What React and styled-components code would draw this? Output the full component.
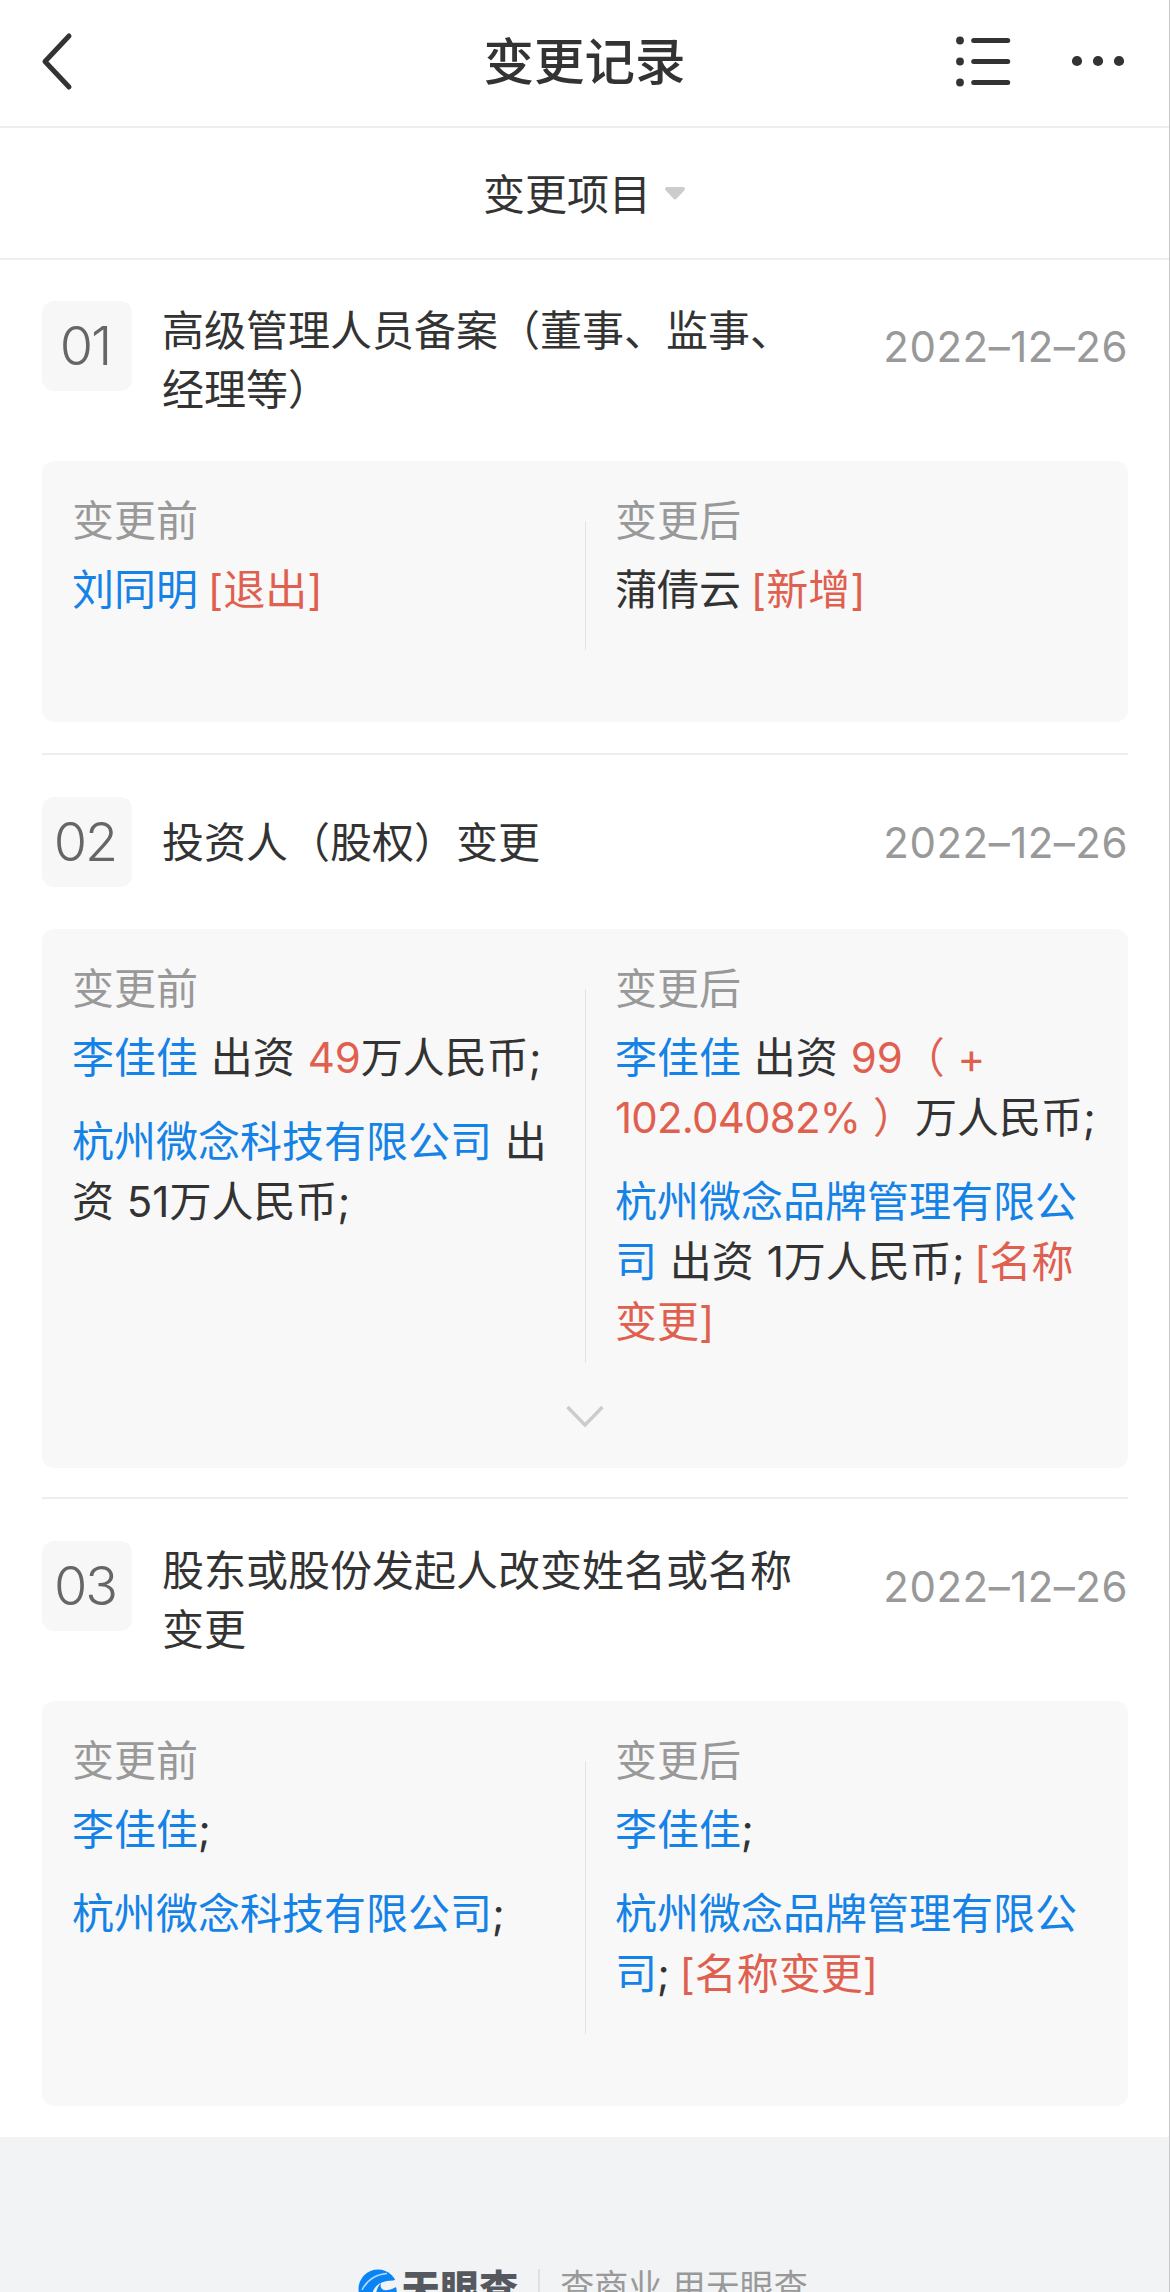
import React from "react";
import styled, { createGlobalStyle } from "styled-components";

const GlobalStyle = createGlobalStyle`
  * {
    box-sizing: border-box;
  }

  body {
    margin: 0;
    background: #fff;
    color: #333;
    font-family: Inter, "Noto Sans CJK SC", sans-serif;
    font-size: 42px;
  }
`;

// every entry is a list of lines, every line a list of [kind, text]
const records = [
  {
    no: "01",
    title: ["高级管理人员备案（董事、监事、", "经理等）"],
    date: "2022–12–26",
    before: [[[["link", "刘同明"], ["", " "], ["tag", "[退出]"]]]],
    after: [[[["", "蒲倩云 "], ["tag", "[新增]"]]]],
  },
  {
    no: "02",
    title: ["投资人（股权）变更"],
    date: "2022–12–26",
    more: true,
    before: [
      [[["link", "李佳佳"], ["", " 出资 "], ["mark", "49"], ["", "万人民币;"]]],
      [
        [["link", "杭州微念科技有限公司"], ["", " 出"]],
        [["", "资 51万人民币;"]],
      ],
    ],
    after: [
      [
        [["link", "李佳佳"], ["", " 出资 "], ["mark", "99（ +"]],
        [["rate", "102.04082%"], ["mark", " ）"], ["", "万人民币;"]],
      ],
      [
        [["link", "杭州微念品牌管理有限公"]],
        [["link", "司"], ["", " 出资 1万人民币; "], ["tag", "[名称"]],
        [["mark", "变更]"]],
      ],
    ],
  },
  {
    no: "03",
    title: ["股东或股份发起人改变姓名或名称", "变更"],
    date: "2022–12–26",
    before: [
      [[["link", "李佳佳"], ["", ";"]]],
      [[["link", "杭州微念科技有限公司"], ["", ";"]]],
    ],
    after: [
      [[["link", "李佳佳"], ["", ";"]]],
      [
        [["link", "杭州微念品牌管理有限公"]],
        [["link", "司"], ["", "; "], ["tag", "[名称变更]"]],
      ],
    ],
  },
];

const Side = ({ label, items, more }) => (
  <Column $more={more}>
    <Label>{label}</Label>
    {items.map((lines, i) => (
      <Entry key={i}>
        {lines.map((parts, j) => (
          <Line key={j}>
            {parts.map(([kind, text], k) => (
              <Part key={k} $kind={kind}>
                {text}
              </Part>
            ))}
          </Line>
        ))}
      </Entry>
    ))}
  </Column>
);

const Record = ({ no, title, date, before, after, more }) => (
  <RecordItem $more={more}>
    <RecordHead>
      <Badge>{no}</Badge>
      <RecordTitle>
        {title.map((line) => (
          <span key={line}>{line}</span>
        ))}
      </RecordTitle>
      <RecordDate>{date}</RecordDate>
    </RecordHead>
    <Card>
      <Compare>
        <Side label="变更前" items={before} more={more} />
        <Separator />
        <Side label="变更后" items={after} more={more} />
      </Compare>
      <CardFoot $more={more}>
        {more && (
          <svg width="42" height="26" viewBox="0 0 42 26" fill="none">
            <path d="M3.5 4 21 22 38.5 4" stroke="#ccc" strokeWidth="3.5" />
          </svg>
        )}
      </CardFoot>
    </Card>
  </RecordItem>
);

const App = () => (
  <Page>
    <GlobalStyle />
    <Header>
      <IconButton>
        <svg width="34" height="60" viewBox="0 0 34 60" fill="none">
          <path
            d="M29 5 5 30.5 29 56"
            stroke="#333"
            strokeWidth="5"
            strokeLinecap="round"
            strokeLinejoin="round"
          />
        </svg>
      </IconButton>
      <HeaderTitle>变更记录</HeaderTitle>
      <Actions>
        <svg width="56" height="52" viewBox="0 0 56 52" fill="#333">
          <circle cx="5" cy="5.5" r="3.9" />
          <circle cx="5" cy="26.5" r="3.9" />
          <circle cx="5" cy="47.5" r="3.9" />
          <rect x="16.2" y="3" width="39" height="5" rx="2.5" />
          <rect x="16.2" y="24" width="39" height="5" rx="2.5" />
          <rect x="16.2" y="45" width="39" height="5" rx="2.5" />
        </svg>
        <svg width="54" height="12" viewBox="0 0 54 12" fill="#333">
          <circle cx="6" cy="6" r="5.1" />
          <circle cx="27" cy="6" r="5.1" />
          <circle cx="48" cy="6" r="5.1" />
        </svg>
      </Actions>
    </Header>
    <Filter>
      变更项目
      <svg width="22" height="16" viewBox="0 0 22 16">
        <path
          d="M3 3H19L11 11.5Z"
          fill="#ccc"
          stroke="#ccc"
          strokeWidth="4"
          strokeLinejoin="round"
        />
      </svg>
    </Filter>
    <List>
      {records.map((record) => (
        <Record key={record.no} {...record} />
      ))}
    </List>
    <Footer>
      <Brand>
        <svg width="40" height="40" viewBox="0 0 40 40">
          <circle cx="20" cy="20" r="19.5" fill="#0a84f5" />
          <path
            d="M4 21C9 11 17 5.5 29 4.500"
            stroke="#b5d9fb"
            strokeWidth="1.5"
            fill="none"
          />
          <path
            d="M14 34C12 21 19 11.5 35 11.5L40 10V24H30L20 40Z"
            fill="#f1f3f5"
          />
          <path
            d="M19 40C16 28 18 19 23 14C21 21 27 24 38 18C40 24 38 33 30 38Z"
            fill="#0a84f5"
          />
        </svg>
        <BrandName>天眼查</BrandName>
      </Brand>
      <Slogan>查商业 用天眼查</Slogan>
    </Footer>
  </Page>
);

const Page = styled.div`
  display: flex;
  flex-direction: column;
  width: 1170px;
  height: 2292px;
  overflow: hidden;
  border-right: 1px solid #c6c6c8;
`;

const Header = styled.header`
  display: grid;
  grid-template-columns: 300px 1fr 300px;
  align-items: center;
  flex-shrink: 0;
  height: 128px;
  padding: 0 40px 4px 40px;
  border-bottom: 2px solid #eee;
`;

const IconButton = styled.button`
  display: flex;
  padding: 0;
  border: none;
  background: none;
`;

const HeaderTitle = styled.h1`
  margin: 2px 0 0;
  font-size: 50.5px;
  font-weight: 500;
  line-height: 60px;
  text-align: center;
`;

const Actions = styled.div`
  display: flex;
  align-items: center;
  justify-content: flex-end;
  gap: 60px;
  margin-right: 4px;
`;

const Filter = styled.div`
  display: flex;
  align-items: center;
  justify-content: center;
  gap: 13px;
  flex-shrink: 0;
  height: 132px;
  padding-bottom: 4px;
  border-bottom: 2px solid #eee;

  svg {
    margin-top: 5px;
  }
`;

const List = styled.main`
  flex-shrink: 0;
  padding: 0 41px 0 42px;
`;

const RecordItem = styled.section`
  padding: 41px 0 ${({ $more }) => ($more ? "29px" : "31px")};

  & + & {
    padding-top: 42px;
    border-top: 2px solid #eee;
  }
`;

const RecordHead = styled.div`
  display: flex;
  align-items: flex-start;
`;

const Badge = styled.div`
  width: 90px;
  height: 90px;
  flex-shrink: 0;
  margin-right: 30px;
  border-radius: 12px;
  background: #f7f7f7;
  color: #666;
  font-size: 54px;
  font-weight: 350;
  line-height: 90px;
  letter-spacing: -2px;
  text-indent: -4px;
  text-align: center;
`;

const RecordTitle = styled.h2`
  display: flex;
  flex-direction: column;
  justify-content: center;
  flex: 1;
  min-height: 90px;
  margin: 0;
  font-size: 42px;
  font-weight: 400;
  line-height: 59px;
  white-space: nowrap;
`;

const RecordDate = styled.time`
  margin: 1px 0 -1px;
  color: #999;
  font-weight: 380;
  line-height: 90px;
  letter-spacing: 0.5px;
`;

const Card = styled.div`
  margin-top: 42px;
  border-radius: 12px;
  background: #f8f8f8;
`;

const Compare = styled.div`
  display: grid;
  grid-template-columns: 513px 1px 1fr;
  padding: 30px 0 0 30px;
`;

const Column = styled.div`
  padding-bottom: ${({ $more }) => ($more ? "11px" : "30px")};

  &:last-child {
    padding-left: 29px;
  }
`;

const Separator = styled.div`
  margin-top: 30px;
  background: #e3e3e3;
`;

const Label = styled.div`
  margin-bottom: 9px;
  color: #999;
  line-height: 60px;
`;

const Entry = styled.div`
  margin-bottom: 24px;

  &:last-child {
    margin-bottom: 0;
  }
`;

const Line = styled.div`
  height: 60px;
  line-height: 60px;
  white-space: pre;
  word-spacing: 1px;
`;

const colors = {
  link: "#1482e6",
  mark: "#e0604f",
  rate: "#e0604f",
  tag: "#e0604f",
};

const Part = styled.span`
  margin-left: ${({ $kind }) => ($kind === "tag" ? "-3px" : 0)};
  color: ${({ $kind }) => colors[$kind] || "#333"};
  letter-spacing: ${({ $kind }) => ($kind === "rate" ? "-0.8px" : "normal")};
`;

const CardFoot = styled.div`
  display: flex;
  justify-content: center;
  height: ${({ $more }) => ($more ? "105px" : "72px")};
  padding-top: 40px;
`;

const Footer = styled.footer`
  display: flex;
  justify-content: center;
  flex: 1 0 200px;
  padding: 132px 3px 0 0;
  background: #f1f3f5;
`;

const Brand = styled.div`
  display: flex;
  align-items: flex-start;
  height: 40px;
  padding-right: 20px;
  border-right: 2px solid #dfe1e4;
`;

const BrandName = styled.span`
  margin-left: 3px;
  color: #55585e;
  font-size: 39px;
  font-weight: 900;
  line-height: 40px;
`;

const Slogan = styled.span`
  padding-left: 20px;
  color: #999;
  font-size: 34px;
  line-height: 36px;
`;

export default App;
